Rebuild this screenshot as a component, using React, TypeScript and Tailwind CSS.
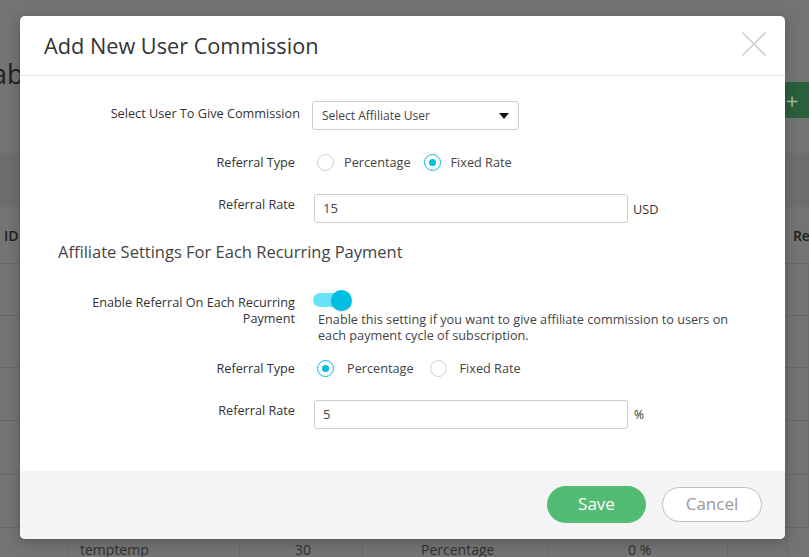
type RadioProps = { checked?: boolean; label: string; textGap: string; after: string };

const Radio = ({ checked, label, textGap, after }: RadioProps) => (
  <div className={`flex items-center ${after}`}>
    <span
      className={`flex h-[17px] w-[17px] items-center justify-center rounded-full border bg-white ${
        checked ? "border-[#00bfe3] border-[1.5px]" : "border-[#cfcfcf]"
      }`}
    >
      {checked && <span className="h-[7px] w-[7px] rounded-full bg-[#00bfe3]" />}
    </span>
    <span className={`${textGap} text-[12.7px] leading-[18px] text-[#444]`}>{label}</span>
  </div>
);

const cols = "grid grid-cols-[68px_172px_123px_185px_180px_60px_21px]";

const BgRow = ({ h }: { h: string }) => (
  <div className={`${cols} ${h} border-b border-[#666]`}>
    {[0, 1, 2, 3, 4, 5, 6].map((i) => (
      <div key={i} className="border-r border-[#6a6a6a]" />
    ))}
  </div>
);

export default function App() {
  return (
    <div className="relative h-[557px] w-[809px] overflow-hidden bg-[#737373] font-['Open_Sans','Noto_Sans',sans-serif]">
      {/* page behind the overlay */}
      <div className="flex h-full flex-col">
        <div className="flex h-[153px] shrink-0 items-start justify-between">
          <div className="ml-[-8px] mt-[56px] text-[27px] leading-[36px] text-[#1f1f1f]">ab</div>
          <div className="mt-[82px] flex h-[36px] w-[30px] items-center justify-center rounded-l-[8px] bg-[#2a5f3b] pr-[4px] text-[22px] text-[#9fb9a5]">
            +
          </div>
        </div>
        <div className="h-[54px] shrink-0 bg-[#6d6d6d]" />
        <div className="flex h-[57px] shrink-0 items-center justify-between border-b border-[#666] text-[14px] font-semibold text-[#1f1f1f]">
          <span className="ml-[4px]">ID</span>
          <span className="mr-[-6px]">Ref</span>
        </div>
        <BgRow h="h-[52px] shrink-0" />
        <BgRow h="h-[52px] shrink-0" />
        <BgRow h="h-[53px] shrink-0" />
        <BgRow h="h-[54px] shrink-0" />
        <BgRow h="h-[53px] shrink-0" />
        <div className={`${cols} h-[50px] shrink-0 pt-[12px] text-[14px] leading-[20px] text-[#2f2f2f]`}>
          <div className="border-r border-[#6a6a6a]" />
          <div className="border-r border-[#6a6a6a] pl-[12px]">temptemp</div>
          <div className="border-r border-[#6a6a6a] pl-[55px]">30</div>
          <div className="border-r border-[#6a6a6a] pl-[58px]">Percentage</div>
          <div className="border-r border-[#6a6a6a] pl-[80px]">0 %</div>
          <div className="border-r border-[#6a6a6a]" />
          <div />
        </div>
      </div>

      {/* modal */}
      <div className="absolute left-[20px] top-[16px] flex h-[523px] w-[765px] flex-col overflow-hidden rounded-[5px] bg-white shadow-[0_3px_12px_rgba(0,0,0,0.25)]">
        <div className="flex h-[60px] shrink-0 items-center justify-between border-b border-[#e5e5e5] pl-[24px] pr-[18px]">
          <h2 className="text-[21.7px] leading-[28px] text-[#333]">Add New User Commission</h2>
          <svg width="26" height="26" viewBox="0 0 26 26" className="mt-[-4px]">
            <path d="M1.5 1.5 L24.5 24.5 M24.5 1.5 L1.5 24.5" stroke="#cfcfcf" strokeWidth="1.6" fill="none" />
          </svg>
        </div>

        <div className="flex-1 pt-[25px]">
          <div className="flex items-start">
            <div className="ml-[65px] mr-[12px] w-[215px] pt-[3px] text-right text-[12.7px] leading-[18px] text-[#333]">
              Select User To Give Commission
            </div>
            <div className="flex h-[29px] w-[207px] items-center justify-between rounded-[3px] border border-[#ccc] pl-[9px] pr-[9px]">
              <span className="text-[12px] text-[#444]">Select Affiliate User</span>
              <svg width="10" height="6" viewBox="0 0 10 6">
                <path d="M0 0 L10 0 L5 6 Z" fill="#111" />
              </svg>
            </div>
          </div>

          <div className="mt-[22px] flex h-[20px] items-center">
            <div className="ml-[60px] mr-[22px] w-[215px] text-right text-[12.7px] leading-[18px] text-[#333]">Referral Type</div>
            <Radio label="Percentage" textGap="ml-[10px]" after="mr-[13px]" />
            <Radio checked label="Fixed Rate" textGap="ml-[10px]" after="" />
          </div>

          <div className="mt-[22px] flex items-start">
            <div className="ml-[60px] mr-[19px] w-[215px] pt-[1px] text-right text-[12.7px] leading-[18px] text-[#333]">Referral Rate</div>
            <div className="flex h-[29px] w-[314px] items-center rounded-[3px] border border-[#ccc] pl-[8px] text-[13px] text-[#444]">
              15
            </div>
            <span className="ml-[5px] mt-[6px] text-[12.7px] leading-[18px] text-[#333]">USD</span>
          </div>

          <h3 className="ml-[38px] mt-[18px] text-[16.5px] leading-[22px] text-[#444]">
            Affiliate Settings For Each Recurring Payment
          </h3>

          <div className="mt-[27px] flex items-start">
            <div className="ml-[60px] mr-[18px] w-[215px] pt-[4px] text-right text-[12.7px] leading-[16px] text-[#333]">
              Enable Referral On Each Recurring Payment
            </div>
            <div className="flex w-[425px] flex-col">
              <div className="relative h-[21px] w-[40px]">
                <div className="absolute left-0 top-[3px] h-[14px] w-[30px] rounded-full bg-[#67e2f7]" />
                <div className="absolute left-[18px] top-0 h-[21px] w-[21px] rounded-full bg-[#00bfe3] shadow-[0_1px_2px_rgba(0,0,0,0.15)]" />
              </div>
              <p className="ml-[5px] text-[12.7px] leading-[16px] text-[#444]">
                Enable this setting if you want to give affiliate commission to users on each payment cycle of subscription.
              </p>
            </div>
          </div>

          <div className="mt-[15px] flex h-[20px] items-center">
            <div className="ml-[60px] mr-[22px] w-[215px] text-right text-[12.7px] leading-[18px] text-[#333]">Referral Type</div>
            <Radio checked label="Percentage" textGap="ml-[13px]" after="mr-[16px]" />
            <Radio label="Fixed Rate" textGap="ml-[13px]" after="" />
          </div>

          <div className="mt-[22px] flex items-start">
            <div className="ml-[60px] mr-[19px] w-[215px] pt-[1px] text-right text-[12.7px] leading-[18px] text-[#333]">Referral Rate</div>
            <div className="flex h-[29px] w-[314px] items-center rounded-[3px] border border-[#ccc] pl-[8px] text-[13px] text-[#444]">
              5
            </div>
            <span className="ml-[6px] mt-[6px] text-[12px] leading-[18px] text-[#333]">%</span>
          </div>
        </div>

        <div className="flex h-[68px] shrink-0 items-center justify-end gap-[16px] bg-[#f4f4f4] pb-[2px] pr-[23px]">
          <button className="h-[37px] w-[99px] rounded-full bg-[#52bb74] text-[17px] text-white">Save</button>
          <button className="h-[35px] w-[100px] rounded-full border border-[#bdbdbd] bg-white text-[17px] text-[#999]">
            Cancel
          </button>
        </div>
      </div>
    </div>
  );
}
